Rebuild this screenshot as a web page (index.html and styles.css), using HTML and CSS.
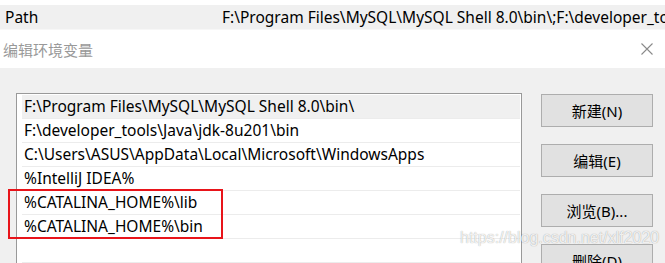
FILE: index.html
```html
<!DOCTYPE html>
<html lang="zh-CN">
<head>
    <meta charset="UTF-8">
    <meta name="viewport" content="width=device-width, initial-scale=1.0">
    <title>编辑环境变量</title>
    <link rel="stylesheet" href="styles.css">
</head>
<body>
    <div class="var-strip">
        <div class="var-row">
            <span class="var-name">Path</span>
            <span class="var-value">F:\Program Files\MySQL\MySQL Shell 8.0\bin\;F:\developer_tools\Java\jdk-8u201\bin;C:\Users\ASUS\AppData\Local\Microsoft\WindowsApps</span>
        </div>
    </div>

    <div class="title-bar">
        <span class="title">编辑环境变量</span>
        <svg class="close-icon" width="12" height="12" viewBox="0 0 12 12">
            <path d="M0.5 0.5 L11.5 11.5 M11.5 0.5 L0.5 11.5" stroke="#8a8a8a" stroke-width="1.1" fill="none"/>
        </svg>
    </div>

    <div class="dialog-body">
        <div class="path-list">
            <div class="path-item active">F:\Program Files\MySQL\MySQL Shell 8.0\bin\</div>
            <div class="path-item">F:\developer_tools\Java\jdk-8u201\bin</div>
            <div class="path-item">C:\Users\ASUS\AppData\Local\Microsoft\WindowsApps</div>
            <div class="path-item">%IntelliJ IDEA%</div>
            <div class="path-item">%CATALINA_HOME%\lib</div>
            <div class="path-item">%CATALINA_HOME%\bin</div>
            <div class="path-item"></div>
            <div class="highlight-box"></div>
        </div>

        <div class="actions">
            <button class="btn">新建(N)</button>
            <button class="btn">编辑(E)</button>
            <button class="btn">浏览(B)...</button>
            <button class="btn">删除(D)</button>
        </div>

        <div class="watermark">https://blog.csdn.net/xlf2020</div>
    </div>
</body>
</html>
```

FILE: styles.css
```css
body {
    margin: 0;
    width: 665px;
    height: 263px;
    overflow: hidden;
    background-color: #f0f0f0;
    font-family: "Noto Sans", "Noto Sans CJK SC", sans-serif;
    font-size: 15.5px;
    color: #000;
}
.var-strip {
    background: white;
    padding-top: 5px;
    height: 30px;
    box-sizing: border-box;
    border-bottom: 1px solid #a0a0a0;
}
.var-row {
    display: flex;
    height: 24px;
    line-height: 24px;
    background: #f0f0f0;
    white-space: nowrap;
    overflow: hidden;
    border-bottom: 4px solid #f7f7f7;
}
.var-name {
    width: 217px;
    padding-left: 5px;
    flex-shrink: 0;
}
.title-bar {
    display: flex;
    justify-content: space-between;
    align-items: center;
    height: 38px;
    background: white;
    padding: 0 12px 0 3px;
}
.title {
    color: #999;
    font-size: 15px;
}
.dialog-body {
    position: relative;
    display: flex;
    padding: 25px 0 0 16px;
}
.path-list {
    position: relative;
    width: 498px;
    height: 200px;
    background: white;
    border: 1px solid #999;
    padding: 1px 1px 0 5px;
}
.path-item {
    height: 23px;
    line-height: 23px;
    padding-left: 2px;
    border-bottom: 1px solid #ececec;
    white-space: nowrap;
}
.path-item.active {
    background: #f0f0f0;
}
.highlight-box {
    position: absolute;
    left: -9px;
    top: 95px;
    width: 211px;
    height: 46px;
    border: 2px solid #e8141a;
}
.actions {
    display: flex;
    flex-direction: column;
    gap: 17px;
    margin-left: 19px;
    margin-top: 1px;
}
.btn {
    width: 112px;
    height: 33px;
    background: #e1e1e1;
    border: 1px solid #adadad;
    font-family: inherit;
    font-size: 15px;
    color: #000;
    padding: 0;
}
.watermark {
    position: absolute;
    left: 460px;
    top: 161px;
    font-family: "Liberation Sans", Arial, sans-serif;
    font-size: 16px;
    color: rgba(255, 255, 255, 0.85);
    text-shadow: 0 0 1px rgba(0, 0, 0, 0.4);
}
```
